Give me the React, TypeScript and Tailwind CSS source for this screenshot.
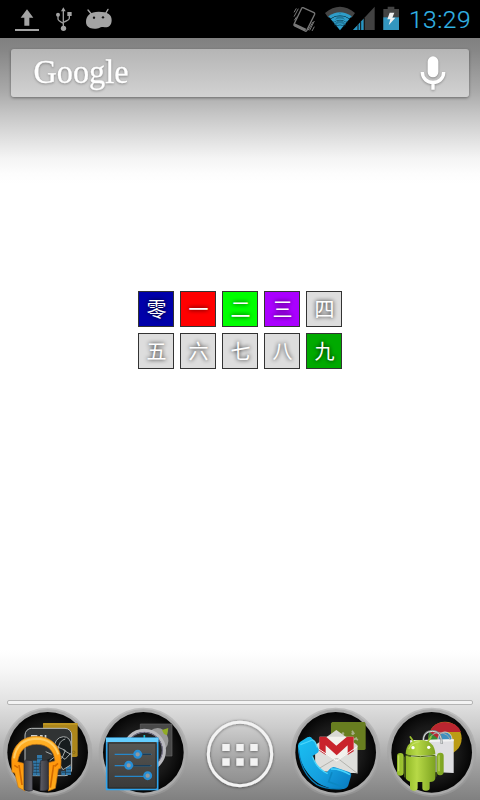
import React from "react";

const tiles: { label: string; color: string }[] = [
  { label: "零", color: "bg-[#0000aa]" },
  { label: "一", color: "bg-[#ff0000]" },
  { label: "二", color: "bg-[#00ff00]" },
  { label: "三", color: "bg-[#aa00ff]" },
  { label: "四", color: "bg-[#dddddd]" },
  { label: "五", color: "bg-[#dddddd]" },
  { label: "六", color: "bg-[#dddddd]" },
  { label: "七", color: "bg-[#dddddd]" },
  { label: "八", color: "bg-[#dddddd]" },
  { label: "九", color: "bg-[#00aa00]" },
];

function StatusLeft() {
  return (
    <svg width="160" height="38" viewBox="0 0 480 114" fill="#a3a3a3">
      <path d="M81 28l19 25H88v24H73V53H62zM45 87h72v6H45z" />
      <g stroke="#9c9c9c" strokeWidth="4" fill="none">
        <path d="M190 32v50M174 45v12q0 5 16 13M208 45v10q0 5-18 12" />
      </g>
      <path d="M190 22l7 12h-14z" />
      <circle cx="190.500" cy="85" r="8" />
      <circle cx="174" cy="44" r="6" />
      <path d="M202 36h13v12h-13z" />
      <path d="M264 30l10 12M324 28l-7 12" stroke="#a3a3a3" strokeWidth="4" strokeLinecap="round" />
      <path d="M258 66c0-20 13-31 38-31 27 0 40 9 39 27-1 14-9 21-21 20-7-1-11-2-15 1-8 4-20 4-29 1-9-4-12-10-12-18z" />
      <circle cx="282" cy="53" r="3.500" fill="#111" />
      <circle cx="309" cy="52" r="3.500" fill="#111" />
    </svg>
  );
}

function StatusRight() {
  return (
    <svg width="120" height="38" viewBox="0 0 360 114">
      <g fill="none" stroke="#777" strokeWidth="4">
        <path d="M69 23l33 15q3 2 2 5L80 92q-2 3-5 1L44 78q-3-2-2-5L65 25q1-3 4-2z" />
        <path d="M42 73l35 17" strokeWidth="8" />
        <path d="M42 37l7-12M42 50l13-24M43 61l7-11M89 91l14-28M96 93l7-13M84 91l15-25" strokeWidth="3" />
      </g>
      <path d="M135 39q45-37 90 0l-10 14q-35-27-70 0z" fill="#444" />
      <path d="M145 49q35-25 70 0l-35 42z" fill="#2e9dc9" />
      <path d="M150 57q30-22 60 0M158 68q22-17 44 0M167 79q13-10 26 0" fill="none" stroke="#092b39" strokeWidth="3" />
      <path d="M180 38l16 23h-9l12 15h-38l12-15h-9z" fill="#17617e" opacity=".6" />
      <path d="M151 53q29-19 58 0M161 64q19-13 38 0M170 75q10-7 20 0" fill="none" stroke="#309ec8" strokeWidth="4" />
      <path d="M284 20v70h-65z" fill="#424242" />
      <path d="M251 56v34h-32z" fill="#2696c4" />
      <path d="M234 73v17M242 65v25M253 54v36" stroke="#111" strokeWidth="3" />
      <path d="M323 20h20v7h14v63h-47V27h13z" fill="#434343" />
      <path d="M310 52h47v38h-47z" fill="#3396bf" />
      <path d="M329 38h14l-6 15h9l-20 23 5-18h-9z" fill="#f0f0f0" />
    </svg>
  );
}

function Folder({ cx, id, className = "", children }: { cx: number; id: string; className?: string; children: React.ReactNode }) {
  return (
    <svg className={"shrink-0 overflow-visible " + className} width="95" height="92" viewBox="0 39 285 276">
      <defs>
        <radialGradient id={id}>
          <stop offset="0" stopColor="#292929" />
          <stop offset=".65" stopColor="#181818" />
          <stop offset="1" stopColor="#050505" />
        </radialGradient>
      </defs>
      <circle cx={cx} cy="172" r="134" fill="#a2a2a2" opacity=".5" />
      <circle cx={cx} cy="172" r="129" fill="#a9a9a9" />
      <circle cx={cx} cy="172" r="121" fill={"url(#" + id + ")"} />
      {children}
    </svg>
  );
}

function MusicFolder() {
  return (
    <Folder cx={143} id="musicDisc">
      <defs>
        <linearGradient id="orange" x1="0" y1="0" x2="0" y2="1">
          <stop offset="0" stopColor="#ffb62c" />
          <stop offset=".5" stopColor="#ff970c" />
          <stop offset="1" stopColor="#ffad1c" />
        </linearGradient>
        <linearGradient id="cup" x1="0" y1="0" x2="1" y2="0">
          <stop offset="0" stopColor="#3b3b42" />
          <stop offset=".45" stopColor="#777780" />
          <stop offset="1" stopColor="#35353c" />
        </linearGradient>
      </defs>
      <path d="M132 84h97q4 0 4 5v92q0 5-5 5h-95q-4 0-4-5V89q0-5 3-5z" fill="#ac861b" />
      <path d="M129 87h104" stroke="#c39a24" strokeWidth="4" />
      <circle cx="221" cy="172" r="4" fill="none" stroke="#725b18" strokeWidth="2" />
      <rect x="75" y="100" width="140" height="142" rx="20" fill="#303334" stroke="#b8bcbc" strokeWidth="3" />
      <path d="M93 120h19v18H93zM120 120h8v12h-8zM134 120h5v12h-5z" fill="#cdd0d0" />
      <path d="M198 214h15v26h-15zM184 229h12v12h-12z" fill="#3177a8" />
      <path d="M161 151q5-24 29-26 22 0 23 25l-2 56-19 20-12-14-18 26-14-17-16-9 9-18 17-7z" fill="#171c1e" />
      <g fill="none" stroke="#a5a9a9" strokeWidth="3">
        <path d="M161 165q2-38 29-40 22 0 24 29M174 164q3-28 22-32M149 197l25-19 21 15 17-18M151 216l24-15 14 23 23-14M166 153l30 13-10 23-23 10M190 165l22 13M137 170l18 8M177 178l-7 17" />
      </g>
      <path d="M98 242v-45h12v45zM111 242v-62h15v62zM128 242v-30h12v30z" fill="#3177a8" />
      <path d="M98 205h42M98 214h42M98 223h42M98 232h42M110 191h17M200 223h13M186 232h28" stroke="#15374a" strokeWidth="2" />
      {/* Headband and side arms leave the album artwork visible between them. */}
      <path fillRule="evenodd" d="M35 207c-3-50 28-83 74-83s77 33 74 79l-1 17-7 2-9 58-21 8V203l20-5c-3-32-23-50-55-50-33 0-52 19-57 52l22 6v82l-20-11-11-43-8-3z" fill="url(#orange)" stroke="#c77713" strokeWidth="2" />
      <path d="M42 190c6-38 29-58 67-59 36 1 57 19 66 47" fill="none" stroke="#ffcb62" strokeWidth="6" />
      <path d="M57 210l9 60M161 210l-10 68M43 211l11 7M174 205l-10 9" stroke="#d36a00" strokeWidth="5" />
      <path d="M77 195l20 2v90q-12 4-25-3v-85zM122 197l18-2 5 5v83q-10 7-25 4z" fill="url(#cup)" stroke="#282830" strokeWidth="2" />
      <path d="M98 201q7 15 0 37zM120 201q-7 15 0 37z" fill="#4d4d56" />
    </Folder>
  );
}

function SettingsFolder() {
  return (
    <Folder cx={145} id="settingsDisc">
      <defs>
        <linearGradient id="panel" x1="0" y1="0" x2="0" y2="1">
          <stop stopColor="#5a5a57" />
          <stop offset="1" stopColor="#393938" />
        </linearGradient>
      </defs>
      <path d="M136 87h95v96h-95z" fill="#494949" stroke="#656565" strokeWidth="2" />
      <path d="M164 109q23-18 42-3l13-5-3 19q10 20-3 38l-30 15z" fill="#999" />
      <path d="M201 105l19-6-4 22-9-4z" fill="#91ac24" />
      <circle cx="148" cy="166" r="60" fill="#202324" stroke="#b9b9be" strokeWidth="10" />
      <circle cx="148" cy="166" r="54" fill="none" stroke="#7c7792" strokeWidth="3" />
      <path d="M148 120v13" stroke="#21bcc5" strokeWidth="5" />
      <path d="M35 130h153v153H35z" fill="url(#panel)" stroke="#2fa4ed" strokeWidth="5" />
      <path d="M33 128h157v13H33z" fill="#65ceff" />
      <path d="M40 144h143M40 145v134h143V145" fill="none" stroke="#252829" strokeWidth="3" />
      <g stroke="#2587ca" strokeWidth="4">
        <path d="M59 178h110M59 212h110M59 244h110" />
        <path d="M142 178h26M115 212h52" stroke="#173e5d" />
      </g>
      <g fill="#91999e" stroke="#268ed5" strokeWidth="7">
        <circle cx="128" cy="178" r="10" /><circle cx="101" cy="211" r="10" /><circle cx="158" cy="242" r="10" />
      </g>
    </Folder>
  );
}

function AppsButton() {
  return (
    <svg className="shrink-0 overflow-visible" width="95" height="92" viewBox="0 39 285 276">
      <defs>
        <filter id="softShade" x="-30%" y="-30%" width="160%" height="160%">
          <feDropShadow dx="0" dy="1" stdDeviation="5" floodColor="#000" floodOpacity=".55" />
        </filter>
      </defs>
      <g filter="url(#softShade)">
        <circle cx="150" cy="177" r="95" fill="none" stroke="#f3f3f3" strokeWidth="9" />
        <path d="M97 147h22v21H97zM139 147h22v21h-22zM181 147h22v21h-22zM97 190h22v22H97zM139 190h22v22h-22zM181 190h22v22h-22z" fill="#f3f3f3" />
      </g>
    </svg>
  );
}

function PhoneFolder() {
  return (
    <Folder cx={152} id="phoneDisc">
      <defs>
        <linearGradient id="phoneBlue" x1="0" y1="0" x2="1" y2="1">
          <stop stopColor="#1ac2f4" />
          <stop offset=".6" stopColor="#159ede" />
          <stop offset="1" stopColor="#0879bf" />
        </linearGradient>
      </defs>
      <path d="M142 81h97l3 5v76l-4 3h-96l-4-4V85z" fill="#687e20" />
      <path d="M201 107l7 10M200 137l16-9M210 130l9 5" stroke="#a6ae88" strokeWidth="5" />
      <circle cx="174" cy="116" r="4" fill="#a6ae88" /><circle cx="203" cy="116" r="4" fill="#a6ae88" />
      <path d="M91 150l63-45 63 45v84l-126-7z" fill="#d8d8d4" />
      <path d="M104 125h102v50l-51 25-51-25z" fill="#f2f1ed" />
      <path d="M91 151l64 47 62-47v84l-126-8z" fill="#dededb" />
      <path d="M103 125h20l31 27 32-27h20v44l-18 11v-29l-33 30-33-30v29l-19-13z" fill="#c9232c" />
      <path d="M91 227l57-34q7-4 14 0l55 42" fill="none" stroke="#b3b3ae" strokeWidth="3" />
      <path d="M91 155l64 43 62-43" fill="none" stroke="#f7f7f5" strokeWidth="3" />
      <path d="M39 153q0-9 7-13l21-13q10-5 15 4l19 31q2 8-5 13l-15 9q10 32 43 49l11-12q8-7 15-4l42 14q9 3 6 12l-8 28q-4 10-14 11-69 5-108-48-27-35-29-81z" fill="url(#phoneBlue)" />
      <path d="M46 149q22-8 36-14 9 2 14 22M82 184q12 36 46 52M138 222q28-1 57 17" fill="none" stroke="#49d5fc" strokeWidth="4" />
      <path d="M41 165q6 70 55 104 32 16 74 12" fill="none" stroke="#087cb8" strokeWidth="4" />
      <path d="M141 232l-10 28 43 16" fill="none" stroke="#0c87c2" strokeWidth="5" />
    </Folder>
  );
}

function AndroidFolder() {
  return (
    <Folder cx={155} id="androidDisc">
      <defs>
        <linearGradient id="robot" x1="0" y1="0" x2="1" y2="0">
          <stop stopColor="#91b927" />
          <stop offset=".38" stopColor="#b7d947" />
          <stop offset="1" stopColor="#7da320" />
        </linearGradient>
      </defs>
      <circle cx="195" cy="130" r="50" fill="#bb9b15" />
      <path d="M147 120q8-38 48-39 36 0 48 30h-48l-22 20z" fill="#ba2630" />
      <path d="M147 110l26 20 13 49q-39-9-41-49z" fill="#378b36" />
      <circle cx="195" cy="132" r="21" fill="#3e8fbf" stroke="#d4cfc4" strokeWidth="3" />
      <path d="M91 136l130-3v101l-127-6z" fill="#dfdfe2" />
      <path d="M91 136l130-3v6l-130 4z" fill="#f2f2f2" />
      <path d="M130 142q-2-34 28-34 27 0 27 39" fill="none" stroke="#7f8585" strokeWidth="6" />
      <path d="M130 141q-2-32 28-32 27 0 27 37" fill="none" stroke="#d7dada" strokeWidth="3" />
      <path d="M148 134q8-22 30-21 25 1 33 22" fill="none" stroke="#a6aaaa" strokeWidth="3" />
      <path d="M91 126l13 19M153 126l-12 18" stroke="#9dc332" strokeWidth="5" strokeLinecap="round" />
      <g fill="url(#robot)">
        <path d="M77 177q1-41 44-42 43 1 45 42-9 5-45 5t-44-5z" />
        <path d="M77 182q44 9 89 0v66q0 9-10 12l-7 1v18q0 8-10 8-12 1-12-8v-18h-14v18q0 8-11 8-12-1-12-9v-18q-13-4-13-13z" />
        <path d="M51 184q0-10 10-10t10 10v49q0 9-10 9t-10-9zM171 182q0-9 10-9t10 9v49q0 9-10 10t-10-9z" />
      </g>
      <path d="M77 181q44 8 89 0M74 185v62M168 183v62" fill="none" stroke="#4f6a13" strokeWidth="3" />
      <path d="M86 163q9-20 33-23M56 181v48M177 181v48" fill="none" stroke="#d1e97a" strokeWidth="4" opacity=".65" />
      <circle cx="99" cy="158" r="5" fill="#fff" /><circle cx="146" cy="157" r="5" fill="#fff" />
    </Folder>
  );
}

export default function App() {
  return (
    <div className="flex h-[800px] w-[480px] flex-col overflow-hidden bg-white font-['Roboto',sans-serif]">
      <header className="flex h-[38px] shrink-0 items-center bg-black">
        <StatusLeft />
        <div className="ml-[120px] flex items-center">
          <StatusRight />
          <svg width="80" height="38">
            <text x="9" y="28" fill="#33b5e5" fontSize="24.500" fontWeight="300" stroke="#33b5e5" strokeWidth=".2" fontFamily="Roboto, sans-serif" textLength="61.500">13:29</text>
          </svg>
        </div>
      </header>

      <main className="flex flex-1 flex-col bg-[linear-gradient(to_bottom,#808080_0px,#868686_12px,#aaaaaa_54px,#c4c4c4_75px,#dddddd_98px,#f4f4f4_120px,#fdfdfd_136px,#ffffff_146px,#ffffff_612px,#f7f7f7_632px,#e2e2e2_664px,#cbcbcb_690px,#a2a2a2_725px,#808080_762px)]">
        <div className="mx-[11px] mt-[11px] flex h-12 shrink-0 items-center justify-between rounded-[3px] bg-linear-to-b from-[#b5b5b5] to-[#d2d2d2] shadow-[0_1px_3px_rgba(0,0,0,0.4)]">
          <svg width="130" height="48" className="overflow-visible [filter:drop-shadow(0_1px_1px_rgba(0,0,0,0.3))]">
            <text x="22.500" y="34" fill="white" stroke="white" strokeWidth=".3" fontSize="34.500" fontFamily="Liberation Serif, serif" textLength="95" lengthAdjust="spacingAndGlyphs">Google</text>
          </svg>
          <svg width="60" height="48" viewBox="0 0 180 144" className="[filter:drop-shadow(0_1px_1px_rgba(0,0,0,0.3))]">
            <rect x="56" y="22" width="32" height="63" rx="16" fill="white" />
            <path d="M40 69c0 42 64 42 64 0M72 100v22" fill="none" stroke="white" strokeWidth="10" />
          </svg>
        </div>

        <div className="mx-auto mt-[194px] grid grid-cols-5 gap-1.5">
          {tiles.map((tile) => (
            <div key={tile.label} className={"flex size-9 items-center justify-center border border-[#333333] pl-px font-['Noto_Sans_CJK_SC',sans-serif] text-[20px] leading-none text-white [text-shadow:0_0_4px_#000000ee] " + tile.color}>
              {tile.label}
            </div>
          ))}
        </div>

        <div className="mx-[7px] mt-auto h-[5px] shrink-0 rounded-[2px] border border-[#b4b4b4] bg-[#f3f3f3]" />
        <nav className="mt-[3px] flex h-[92px] shrink-0">
          <MusicFolder />
          <SettingsFolder />
          <AppsButton />
          <PhoneFolder />
          <AndroidFolder />
        </nav>
      </main>
    </div>
  );
}
